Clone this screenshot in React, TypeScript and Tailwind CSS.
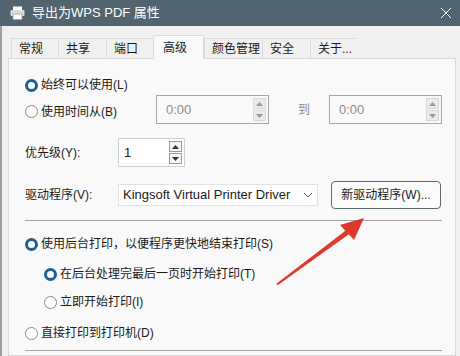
import React from 'react';

const font = { fontFamily: '"Liberation Sans", "Noto Sans CJK SC", sans-serif' };

const Radio = ({ checked }: { checked?: boolean }) =>
  checked ? (
    <span className="box-border inline-block h-[13px] w-[13px] shrink-0 rounded-full border-[3px] border-[#1d5f93] bg-white" />
  ) : (
    <span className="box-border inline-block h-[13px] w-[13px] shrink-0 rounded-full border border-[#8a8a8a] bg-white" />
  );

const Arrow = ({ up, dark }: { up?: boolean; dark?: boolean }) => (
  <svg width="7" height="4" viewBox="0 0 7 4">
    <path d={up ? 'M0 4 L3.5 0 L7 4 Z' : 'M0 0 L3.5 4 L7 0 Z'} fill={dark ? '#333' : '#999'} />
  </svg>
);

const Spinner = ({ dark }: { dark?: boolean }) => (
  <div className="flex h-full w-[15px] flex-col gap-px py-[2px] pr-[2px]">
    <div className={`flex flex-1 items-center justify-center border ${dark ? 'border-[#9a9a9a] bg-[#f4f4f4]' : 'border-[#d8d8d8] bg-[#ebebeb]'}`}>
      <Arrow up dark={dark} />
    </div>
    <div className={`flex flex-1 items-center justify-center border ${dark ? 'border-[#9a9a9a] bg-[#f4f4f4]' : 'border-[#d8d8d8] bg-[#ebebeb]'}`}>
      <Arrow dark={dark} />
    </div>
  </div>
);

const TimeBox = () => (
  <div className="flex h-[29px] w-[113px] items-center justify-between border border-[#a8a8a8] bg-[#f9f9f9] pl-[9px]">
    <span className="text-[13px] text-[#8c8c8c]">0:00</span>
    <Spinner />
  </div>
);

const tabs = ['常规', '共享', '端口', '高级', '颜色管理', '安全', '关于...'];
const tabWidths = ['w-[47px]', 'w-[48px]', 'w-[47px]', 'w-[51px]', 'w-[58px]', 'w-[48px]', 'w-[46px]'];

export default function App() {
  return (
    <div className="relative h-[356px] w-[460px] overflow-hidden bg-[#f0f0f0] text-[12px] text-[#1a1a1a]" style={font}>
      {/* title bar */}
      <div className="flex h-[26px] items-center bg-[#51646f] pl-[10px] pr-[8px] text-white">
        <svg width="15" height="14" viewBox="0 0 15 14">
          <rect x="3" y="0.5" width="9" height="4" fill="#fff" />
          <rect x="0.5" y="4" width="14" height="6" rx="1" fill="#d8dde0" />
          <rect x="3" y="8" width="9" height="5.5" fill="#fff" stroke="#9aa5ab" strokeWidth="0.8" />
        </svg>
        <span className="ml-[7px] text-[13px]">导出为WPS PDF 属性</span>
        <svg className="ml-auto" width="12" height="12" viewBox="0 0 12 12">
          <path d="M1 1 L11 11 M11 1 L1 11" stroke="#fff" strokeWidth="1" />
        </svg>
      </div>

      <div className="flex h-[330px] border-l-2 border-[#9aa0a4] pl-[6px] pr-[5px]">
        <div className="flex flex-1 flex-col">
          {/* tabs */}
          <div className="flex h-[32px] items-end pl-[3px]">
            {tabs.map((t, i) =>
              i === 3 ? (
                <div key={t} className={`${tabWidths[i]} -mb-px z-10 flex h-[24px] items-start border border-b-0 border-[#d9d9d9] bg-[#f9f9f9] pl-[9px] pt-[3px] text-[12px]`}>
                  {t}
                </div>
              ) : (
                <div key={t} className={`${tabWidths[i]} flex h-[20px] items-center border border-b-0 border-r-0 border-[#dcdcdc] bg-[#f0f0f0] pl-[7px] text-[12px]`}>
                  {t}
                </div>
              )
            )}
          </div>

          {/* panel */}
          <div className="flex flex-1 flex-col border border-[#d9d9d9] bg-[#f9f9f9] pl-[16px] pr-[13px] pt-[17px]">
            <div className="flex h-[18px] items-center gap-[3px]">
              <Radio checked />
              <span>始终可以使用(L)</span>
            </div>
            <div className="mt-px flex h-[29px] items-center">
              <div className="flex w-[131px] items-center gap-[3px] pt-[4px]">
                <Radio />
                <span>使用时间从(B)</span>
              </div>
              <TimeBox />
              <span className="ml-[29px] w-[31px] text-[#8c8c8c]">到</span>
              <TimeBox />
            </div>
            <div className="mt-[14px] flex h-[29px] items-center">
              <span className="w-[93px]">优先级(Y):</span>
              <div className="flex h-[29px] w-[67px] justify-between border border-[#d0d0d0] bg-white pl-[5px]">
                <span className="pt-[4px] text-[13px]">1</span>
                <Spinner dark />
              </div>
            </div>
            <div className="mt-[14px] flex h-[28px] items-center">
              <span className="w-[93px]">驱动程序(V):</span>
              <div className="flex h-[22px] w-[200px] items-center justify-between border border-[#e2e2e2] bg-white pl-[4px] pr-[4px]">
                <span className="whitespace-nowrap text-[13px]">Kingsoft Virtual Printer Driver</span>
                <svg width="10" height="6" viewBox="0 0 10 6">
                  <path d="M1 1 L5 5 L9 1" stroke="#555" strokeWidth="1" fill="none" />
                </svg>
              </div>
              <button className="ml-[13px] flex h-[28px] w-[110px] items-center justify-center rounded-[4px] border border-[#5d6b72] bg-[#fbfbfb] text-[12px]">
                新驱动程序(W)...
              </button>
            </div>
            <div className="mt-[11px] h-px bg-[#a5a5a5]" />
            <div className="mt-[14px] flex h-[18px] items-center gap-[3px]">
              <Radio checked />
              <span>使用后台打印，以便程序更快地结束打印(S)</span>
            </div>
            <div className="mt-[12px] flex h-[18px] items-center gap-[3px] pl-[19px]">
              <Radio checked />
              <span>在后台处理完最后一页时开始打印(T)</span>
            </div>
            <div className="mt-[10px] flex h-[18px] items-center gap-[3px] pl-[19px]">
              <Radio />
              <span>立即开始打印(I)</span>
            </div>
            <div className="mt-[13px] flex h-[18px] items-center gap-[3px]">
              <Radio />
              <span>直接打印到打印机(D)</span>
            </div>
            <div className="mt-[8px] h-px bg-[#a5a5a5]" />
          </div>
        </div>
      </div>

      {/* red annotation arrow */}
      <svg className="pointer-events-none absolute left-0 top-0" width="460" height="356" viewBox="0 0 460 356">
        <path d="M276 284 L349 228 L352 232 L278 285 Z" fill="#e0392b" />
        <path d="M364 218 L340 225 L354 240 Z" fill="#e0392b" />
      </svg>
    </div>
  );
}
